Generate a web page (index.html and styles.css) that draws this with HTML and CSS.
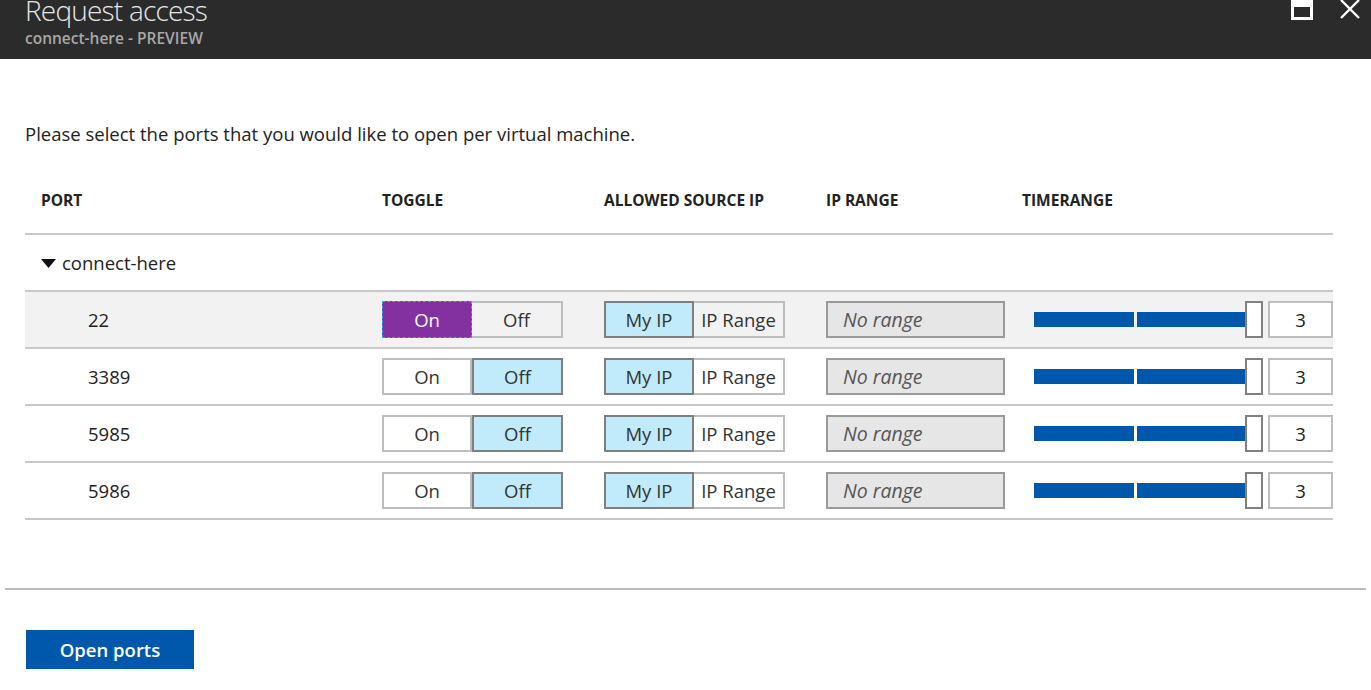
FILE: index.html
```html
<!DOCTYPE html>
<html lang="en">
<head>
<meta charset="utf-8">
<title>Request access</title>
<link rel="stylesheet" href="styles.css">
</head>
<body>
<header class="blade-header">
  <div class="titles">
    <h1 class="title">Request access</h1>
    <div class="subtitle">connect-here - PREVIEW</div>
  </div>
  <div class="window-actions">
    <svg class="icon-max" width="22" height="20" viewBox="0 0 22 20" aria-hidden="true">
      <path fill="#fff" fill-rule="evenodd" d="M0 0H22V20H0Z M3 7V17H19V7Z"/>
    </svg>
    <svg class="icon-close" width="22" height="20" viewBox="0 0 22 20" aria-hidden="true">
      <path d="M2 0L20 18M20 0L2 18" stroke="#fff" stroke-width="2.4" fill="none"/>
    </svg>
  </div>
</header>

<main class="content">
  <p class="intro">Please select the ports that you would like to open per virtual machine.</p>

  <div class="table">
    <div class="row head">
      <div class="cell c-port">PORT</div>
      <div class="cell">TOGGLE</div>
      <div class="cell">ALLOWED SOURCE IP</div>
      <div class="cell">IP RANGE</div>
      <div class="cell">TIMERANGE</div>
    </div>

    <div class="group">
      <svg class="caret" width="15" height="9" viewBox="0 0 15 9" aria-hidden="true">
        <path d="M0 0H15L7.5 9Z" fill="#111"/>
      </svg>
      <span class="group-name">connect-here</span>
    </div>

    <div class="row item selected">
      <div class="cell port-num">22</div>
      <div class="cell">
        <div class="seg">
          <span class="seg-btn on-active">On</span>
          <span class="seg-btn wide">Off</span>
        </div>
      </div>
      <div class="cell">
        <div class="seg">
          <span class="seg-btn picked">My IP</span>
          <span class="seg-btn wide">IP Range</span>
        </div>
      </div>
      <div class="cell"><div class="range-box">No range</div></div>
      <div class="cell time">
        <div class="slider">
          <span class="track t1"></span><span class="track t2"></span><span class="thumb"></span>
        </div>
        <div class="num">3</div>
      </div>
    </div>

    <div class="row item">
      <div class="cell port-num">3389</div>
      <div class="cell">
        <div class="seg">
          <span class="seg-btn">On</span>
          <span class="seg-btn wide picked">Off</span>
        </div>
      </div>
      <div class="cell">
        <div class="seg">
          <span class="seg-btn picked">My IP</span>
          <span class="seg-btn wide">IP Range</span>
        </div>
      </div>
      <div class="cell"><div class="range-box">No range</div></div>
      <div class="cell time">
        <div class="slider">
          <span class="track t1"></span><span class="track t2"></span><span class="thumb"></span>
        </div>
        <div class="num">3</div>
      </div>
    </div>

    <div class="row item">
      <div class="cell port-num">5985</div>
      <div class="cell">
        <div class="seg">
          <span class="seg-btn">On</span>
          <span class="seg-btn wide picked">Off</span>
        </div>
      </div>
      <div class="cell">
        <div class="seg">
          <span class="seg-btn picked">My IP</span>
          <span class="seg-btn wide">IP Range</span>
        </div>
      </div>
      <div class="cell"><div class="range-box">No range</div></div>
      <div class="cell time">
        <div class="slider">
          <span class="track t1"></span><span class="track t2"></span><span class="thumb"></span>
        </div>
        <div class="num">3</div>
      </div>
    </div>

    <div class="row item">
      <div class="cell port-num">5986</div>
      <div class="cell">
        <div class="seg">
          <span class="seg-btn">On</span>
          <span class="seg-btn wide picked">Off</span>
        </div>
      </div>
      <div class="cell">
        <div class="seg">
          <span class="seg-btn picked">My IP</span>
          <span class="seg-btn wide">IP Range</span>
        </div>
      </div>
      <div class="cell"><div class="range-box">No range</div></div>
      <div class="cell time">
        <div class="slider">
          <span class="track t1"></span><span class="track t2"></span><span class="thumb"></span>
        </div>
        <div class="num">3</div>
      </div>
    </div>
  </div>
</main>

<footer class="footer">
  <button class="primary" type="button">Open ports</button>
</footer>
</body>
</html>
```

FILE: styles.css
```css
* { box-sizing: border-box; }

html, body {
  margin: 0;
  padding: 0;
  background: #fff;
  font-family: "Open Sans", "Noto Sans", "Liberation Sans", sans-serif;
  color: #333;
}

.blade-header {
  height: 59px;
  background: #2b2b2b;
  display: flex;
  justify-content: space-between;
  align-items: flex-start;
  padding: 0 10px 0 25px;
  overflow: hidden;
}

.titles {
  display: flex;
  flex-direction: column;
}

.title {
  margin: -9px 0 0 0;
  font-size: 28px;
  line-height: 38px;
  font-weight: 300;
  color: #e6e6e6;
  letter-spacing: -0.8px;
}

.subtitle {
  margin-top: -2px;
  font-size: 15.5px;
  line-height: 22px;
  font-weight: 600;
  color: #a8a8a8;
}

.window-actions {
  display: flex;
  gap: 26px;
}

.window-actions svg { display: block; }

.content {
  padding: 0 38px 0 25px;
}

.intro {
  margin: 62px 0 0 0;
  font-size: 18.5px;
  line-height: 25px;
  color: #222;
}

.table {
  width: 1308px;
}

.row {
  display: grid;
  grid-template-columns: 357px 222px 222px 196px 311px;
  align-items: center;
}

.row.head {
  height: 89px;
  padding-top: 43px;
  align-items: start;
  border-bottom: 2px solid #c8c8c8;
  font-size: 15.5px;
  line-height: 22px;
  font-weight: 700;
  color: #222;
}

.c-port { padding-left: 16px; }

.group {
  height: 57px;
  display: flex;
  align-items: center;
  padding-left: 16px;
  border-bottom: 2px solid #c8c8c8;
  font-size: 18.5px;
  color: #222;
}

.caret {
  display: block;
  margin-right: 6px;
  margin-top: 1px;
}

.row.item {
  height: 57px;
  border-bottom: 2px solid #c8c8c8;
  font-size: 18.5px;
}

.row.item.selected { background: #f2f2f2; }

.port-num { padding-left: 63px; color: #222; }

.seg {
  display: flex;
  height: 37px;
}

.seg-btn {
  width: 90px;
  height: 37px;
  border: 2px solid #bdbdbd;
  display: flex;
  align-items: center;
  justify-content: center;
  color: #333;
  font-size: 18.5px;
}

.seg-btn.wide { width: 91px; border-left-width: 0; }

.seg-btn.picked {
  background: #c1ebfa;
  border: 2px solid #7f7f7f;
}

.seg-btn.on-active {
  background: #8331a0;
  color: #fff;
  border: 1px dashed #1fb0e8;
  outline: 1px solid #8331a0;
  outline-offset: -2px;
}

.range-box {
  width: 179px;
  height: 37px;
  background: #e6e6e6;
  border: 2px solid #9a9a9a;
  display: flex;
  align-items: center;
  padding-left: 15px;
  font-style: italic;
  font-size: 19.5px;
  color: #555;
}

.time {
  display: flex;
  align-items: center;
  padding-left: 12px;
}

.slider {
  display: flex;
  align-items: center;
  height: 37px;
}

.track {
  height: 15px;
  background: #0058ad;
}

.t1 { width: 100px; margin-right: 3px; }
.t2 { width: 108px; }

.thumb {
  width: 18px;
  height: 37px;
  background: #fff;
  border: 2px solid #808080;
}

.num {
  margin-left: 5px;
  width: 65px;
  height: 37px;
  border: 2px solid #bdbdbd;
  background: #fff;
  display: flex;
  align-items: center;
  justify-content: center;
  color: #222;
}

.footer {
  margin: 68px 5px 0 5px;
  border-top: 2px solid #bbb;
  padding: 40px 0 0 21px;
}

.primary {
  width: 168px;
  height: 39px;
  background: #0058ad;
  color: #fff;
  border: 0;
  font-family: inherit;
  font-size: 18.5px;
  font-weight: 600;
  padding: 0;
  cursor: pointer;
}
```
